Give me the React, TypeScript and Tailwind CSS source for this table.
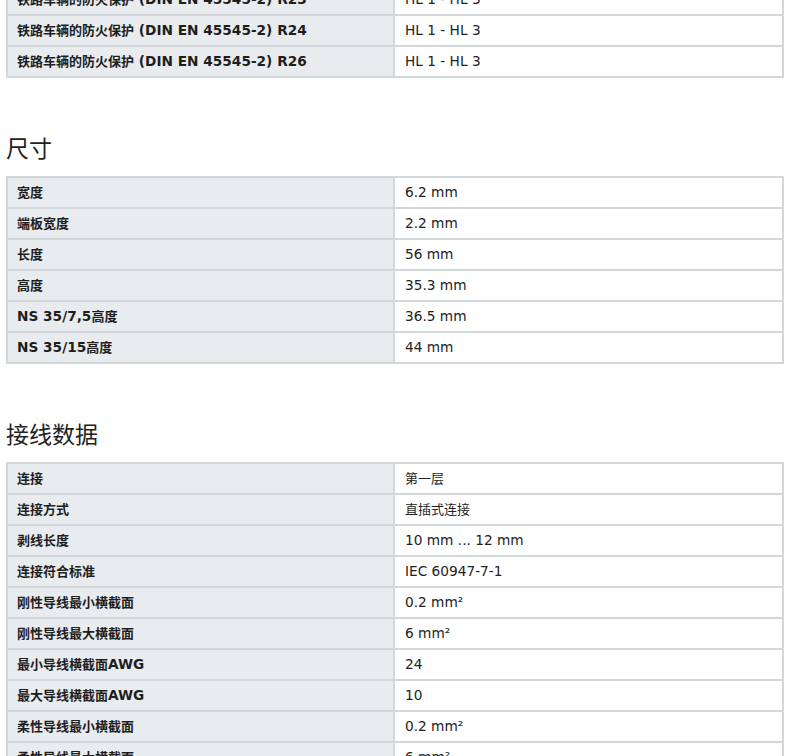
const fireRows = [
  ["铁路车辆的防火保护 (DIN EN 45545-2) R23", "HL 1 - HL 3"],
  ["铁路车辆的防火保护 (DIN EN 45545-2) R24", "HL 1 - HL 3"],
  ["铁路车辆的防火保护 (DIN EN 45545-2) R26", "HL 1 - HL 3"],
];

const sizeRows = [
  ["宽度", "6.2 mm"],
  ["端板宽度", "2.2 mm"],
  ["长度", "56 mm"],
  ["高度", "35.3 mm"],
  ["NS 35/7,5高度", "36.5 mm"],
  ["NS 35/15高度", "44 mm"],
];

const wireRows = [
  ["连接", "第一层"],
  ["连接方式", "直插式连接"],
  ["剥线长度", "10 mm ... 12 mm"],
  ["连接符合标准", "IEC 60947-7-1"],
  ["刚性导线最小横截面", "0.2 mm²"],
  ["刚性导线最大横截面", "6 mm²"],
  ["最小导线横截面AWG", "24"],
  ["最大导线横截面AWG", "10"],
  ["柔性导线最小横截面", "0.2 mm²"],
  ["柔性导线最大横截面", "6 mm²"],
];

const font = "font-['DejaVu_Sans','Noto_Sans_CJK_SC',sans-serif]";

// latin runs are set a touch larger so they match the wider Verdana look
function Mixed({ text }: { text: string }) {
  const parts = text.split(/([\x00-\x7F²]+)/).filter(Boolean);
  return (
    <>
      {parts.map((p, i) =>
        /^[\x00-\x7F²]+$/.test(p) ? (
          <span key={i} className="text-[13.7px] whitespace-pre">{p}</span>
        ) : (
          <span key={i}>{p}</span>
        )
      )}
    </>
  );
}

function SpecTable({ rows }: { rows: string[][] }) {
  return (
    <div className="border-2 border-[#d4d7da]">
      {rows.map(([label, value], i) => (
        <div key={label} className={i > 0 ? "flex h-[31px] border-t-2 border-[#d4d7da]" : "flex h-[29px]"}>
          <div className={`w-[387px] shrink-0 bg-[#e9ecef] border-r-2 border-[#d4d7da] pl-[9px] flex items-center text-[13px] font-bold text-[#1e1e1e] ${font}`}>
            <Mixed text={label} />
          </div>
          <div className={`flex-1 bg-white pl-[10px] flex items-center text-[13px] text-[#222] ${font}`}>
            <Mixed text={value} />
          </div>
        </div>
      ))}
    </div>
  );
}

function Heading({ children }: { children: string }) {
  return (
    <h2 className="mt-[53px] mb-[13px] h-8 leading-8 text-[23px] font-normal text-[#222] font-['Noto_Sans_CJK_SC',sans-serif]">
      {children}
    </h2>
  );
}

export default function App() {
  return (
    <div className="w-[790px] h-[756px] overflow-hidden bg-white">
      <div className="mx-[6px] -mt-[17px]">
        <SpecTable rows={fireRows} />
        <Heading>尺寸</Heading>
        <SpecTable rows={sizeRows} />
        <Heading>接线数据</Heading>
        <SpecTable rows={wireRows} />
      </div>
    </div>
  );
}
